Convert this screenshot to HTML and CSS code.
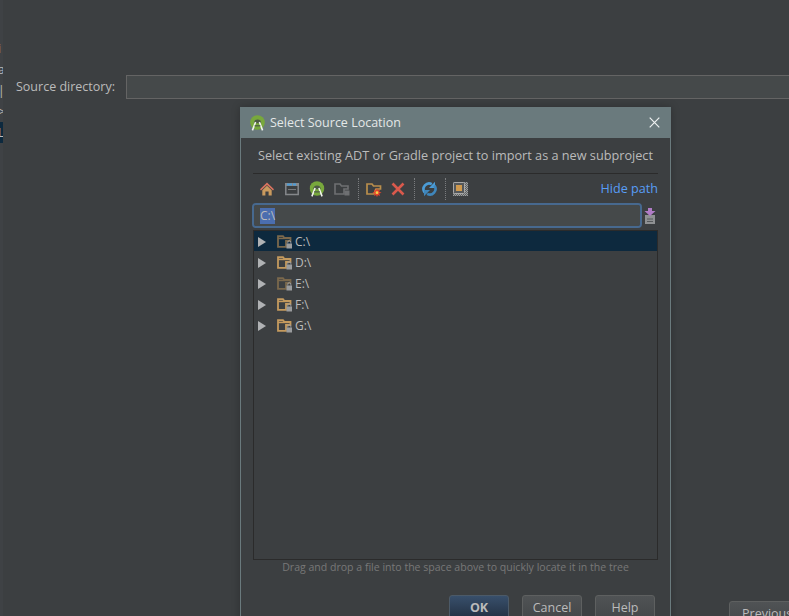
FILE: index.html
```html
<!DOCTYPE html>
<html lang="en">
<head>
<meta charset="utf-8">
<title>Select Source Location</title>
<link rel="stylesheet" href="styles.css">
</head>
<body>
<div class="page">
  <aside class="rail">
    <span class="rail-item">i</span>
    <span class="rail-item">a</span>
    <span class="rail-item">|</span>
    <span class="rail-item">&gt;</span>
    <span class="rail-item selected">L</span>
  </aside>
  <main class="wizard">
    <div class="source-row">
      <label class="source-label">Source directory:</label>
      <div class="source-input"></div>
    </div>
    <div class="wizard-footer"><button class="btn previous">Previous</button></div>
  </main>
</div>

<section class="dialog">
  <header class="titlebar">
    <svg class="title-logo" width="15" height="16" viewBox="0 0 15 16"><use href="#android"/></svg>
    <span class="title-text">Select Source Location</span>
    <svg class="close" width="11" height="11" viewBox="0 0 11 11"><path d="M.7.7L10.3 10.3M10.3.7L.7 10.3" stroke="#eef1f1" stroke-width="1.2"/></svg>
  </header>
  <div class="dialog-body">
    <p class="description">Select existing ADT or Gradle project to import as a new subproject</p>
    <div class="toolbar">
      <div class="tool-group">
        <svg class="tool" width="16" height="16" viewBox="0 0 16 16"><path d="M8 1.5L1 8.2 2 9.4 8 3.9 14 9.4 15 8.2Z" fill="#d9735f"/><path d="M3.3 9.2L8 4.8 12.7 9.2V14.5H9.6V10.5H6.4V14.5H3.3Z" fill="#c99a5e"/></svg>
        <svg class="tool" width="16" height="16" viewBox="0 0 16 16"><rect x="1.8" y="3.5" width="12.4" height="10" fill="none" stroke="#85888b" stroke-width="1.5"/><rect x="1" y="2" width="14" height="3" fill="#85888b"/><rect x="3" y="2.5" width="5" height="2" fill="#4a9bd8"/><rect x="9" y="2.5" width="3" height="2" fill="#4a9bd8"/><path d="M4 8.5H12" stroke="#77797c"/></svg>
        <svg class="tool" width="16" height="16" viewBox="0 0 15 16"><use href="#android"/></svg>
        <svg class="tool" width="16" height="16" viewBox="0 0 16 16"><path d="M1 3H6L7.5 5H14V8H10V13H1Z" fill="none" stroke="#6e7072" stroke-width="1.6"/><rect x="10.5" y="9.5" width="5" height="5" fill="#6e7072"/></svg>
      </div>
      <i class="sep"></i>
      <div class="tool-group tight">
        <svg class="tool" width="16" height="16" viewBox="0 0 16 16"><path d="M1 3H6L7.5 5H14.5V8H10L8 13H1Z" fill="none" stroke="#b98f4c" stroke-width="1.7"/><path d="M11 7L11.9 9.4 14 8.4 13.2 10.7 15.6 11.7 13.2 12.6 14 14.9 11.9 13.9 11 16.2 10.1 13.9 8 14.9 8.8 12.6 6.4 11.7 8.8 10.7 8 8.4 10.1 9.4Z" fill="#e8432a"/><circle cx="11" cy="11.7" r="1.4" fill="#f4d24a"/></svg>
        <svg class="tool" width="16" height="16" viewBox="0 0 16 16"><path d="M2.5 2.5L13.5 13.5M13.5 2.5L2.5 13.5" stroke="#d9594c" stroke-width="2.6"/></svg>
      </div>
      <i class="sep"></i>
      <div class="tool-group">
        <svg class="tool" width="15" height="16" viewBox="0 0 15 16">
          <path d="M2.6 11.4A5.6 5.6 0 0 1 9.8 3.2" fill="none" stroke="#4b9cd6" stroke-width="2.6"/>
          <path d="M13 .8V7H7Z" fill="#4b9cd6"/>
          <path d="M12.4 4.6A5.6 5.6 0 0 1 5.2 12.8" fill="none" stroke="#3f86bb" stroke-width="2.6"/>
          <path d="M2 15.2V9H8Z" fill="#3f86bb"/>
        </svg>
      </div>
      <i class="sep"></i>
      <div class="tool-group">
        <svg class="tool" width="16" height="16" viewBox="0 0 16 16"><defs><pattern id="checks" width="2" height="2" patternUnits="userSpaceOnUse"><rect width="2" height="2" fill="#5c5f61"/><rect width="1" height="1" fill="#9d9f9f"/><rect x="1" y="1" width="1" height="1" fill="#9d9f9f"/></pattern></defs><rect y="1" width="15" height="14" fill="url(#checks)"/><rect x=".5" y="1.5" width="11" height="11" rx="1" fill="#55585a" stroke="#a8a8a8"/><rect x="3" y="4" width="6" height="6" fill="#d09a4e"/></svg>
      </div>
      <a class="hide-path">Hide path</a>
    </div>
    <div class="path-row">
      <div class="path-input"><span class="path-selected">C:\</span></div>
      <svg class="path-action" width="12" height="16" viewBox="0 0 12 16"><rect x="1" y="7" width="10" height="9" fill="#8f9193"/><path d="M3 11H9M3 13.5H9" stroke="#55585a"/><path d="M4 0H8V3H11.5L6 8 .5 3H4Z" fill="#b07cc6"/></svg>
    </div>
    <ul class="tree">
      <li class="tree-row active"><i class="arrow"></i><svg class="folder dim" width="16" height="16" viewBox="0 0 16 16"><use href="#folder"/></svg><span>C:\</span></li>
      <li class="tree-row"><i class="arrow"></i><svg class="folder" width="16" height="16" viewBox="0 0 16 16"><use href="#folder"/></svg><span>D:\</span></li>
      <li class="tree-row"><i class="arrow"></i><svg class="folder dim" width="16" height="16" viewBox="0 0 16 16"><use href="#folder"/></svg><span>E:\</span></li>
      <li class="tree-row"><i class="arrow"></i><svg class="folder" width="16" height="16" viewBox="0 0 16 16"><use href="#folder"/></svg><span>F:\</span></li>
      <li class="tree-row"><i class="arrow"></i><svg class="folder" width="16" height="16" viewBox="0 0 16 16"><use href="#folder"/></svg><span>G:\</span></li>
    </ul>
    <p class="hint">Drag and drop a file into the space above to quickly locate it in the tree</p>
    <div class="actions">
      <button class="btn primary">OK</button>
      <button class="btn">Cancel</button>
      <button class="btn">Help</button>
    </div>
  </div>
</section>

<svg class="defs" width="0" height="0">
  <symbol id="folder" viewBox="0 0 16 16">
    <path d="M1 2.2H6L7.5 4H13.5V7H9V12.8H1Z" fill="none" stroke="currentColor" stroke-width="1.8"/>
    <rect x="1" y="3.6" width="12" height="1.6" fill="currentColor"/>
    <rect x="9.5" y="9.5" width="5.5" height="5" fill="#9a9c9e"/>
    <path d="M10.8 9.5V8.2A1.5 1.5 0 0 1 13.8 8.2V9.5" fill="none" stroke="#9a9c9e"/>
  </symbol>
  <symbol id="android" viewBox="0 0 15 16">
    <circle cx="7.5" cy="7.5" r="7.3" fill="#78a83c"/>
    <path d="M3.8 8.2A3.7 3.7 0 0 1 11.2 8.2Z" fill="#4d5a45"/>
    <path d="M5.6 7L2.4 15.4M9.4 7L12.6 15.4" stroke="#f0f3ec" stroke-width="1.6" fill="none"/>
    <path d="M4.6 10.8H10.4" stroke="#4d5a45" stroke-width="1.2"/>
  </symbol>
</svg>
</body>
</html>
```
FILE: styles.css
```css
* { box-sizing: border-box; }
html, body { margin: 0; height: 616px; overflow: hidden; }
body {
  background: #3c3f41;
  color: #bbbbbb;
  font-family: "Open Sans", "Noto Sans", sans-serif;
  font-size: 12px;
}
.page { display: flex; height: 616px; }
.rail {
  width: 3px;
  flex: none;
  overflow: hidden;
  padding-top: 38px;
  display: flex;
  flex-direction: column;
  background: #3f4245;
}
.rail-item { height: 21px; line-height: 21px; font-size: 12px; color: #bbbbbb; text-indent: -2px; white-space: nowrap; }
.rail-item.selected { background: #0d293e; }
.wizard { flex: 1; display: flex; flex-direction: column; min-width: 0; }
.source-row { display: flex; align-items: center; gap: 10px; padding: 75px 0 0 13px; }
.source-label { font-size: 12.5px; width: 100px; padding-bottom: 2px; color: #bbbbbb; white-space: nowrap; }
.source-input { flex: 1; height: 24px; background: #45494a; border: 1px solid #646464; margin-right: -1px; }
.wizard-footer { margin-top: auto; display: flex; justify-content: flex-end; margin-bottom: -9px; }
.dialog {
  position: absolute;
  left: 240px;
  top: 107px;
  width: 431px;
  height: 530px;
  background: #3c3f41;
  border: 1px solid #6a7a7d;
  box-shadow: 0 0 8px rgba(0, 0, 0, .25);
}
.titlebar {
  height: 30px;
  background: #6a7a7d;
  display: flex;
  align-items: center;
  padding: 0 10px 1px 9px;
  gap: 5px;
  color: #e4e8e8;
  font-size: 12.5px;
}
.title-logo { flex: none; }
.title-text { flex: 1; }
.dialog-body { padding: 0 12px; }
.description { margin: 0; padding: 8px 0 0 5px; height: 35px; line-height: 18px; font-size: 12.7px; white-space: nowrap; color: #bbbbbb; }
.toolbar {
  display: flex;
  align-items: center;
  height: 30px;
  border-top: 1px solid #2b2b2b;
  padding-left: 6px;
}
.tool-group { display: flex; gap: 9px; }
.tool-group.tight { gap: 8px; }
.tool { display: block; flex: none; }
.sep { width: 1px; height: 22px; border-left: 1px dotted #7a7c7e; margin: 0 7px 0 8px; flex: none; }
.hide-path { margin-left: auto; color: #589df6; font-size: 12.6px; }
.path-row { display: flex; align-items: center; gap: 3px; margin-top: 1px; }
.path-input {
  flex: 1;
  height: 23px;
  background: #45494a;
  border: 1px solid #2f2f2f;
  outline: 2px solid #47698f;
  outline-offset: -1px;
  border-radius: 3px;
  padding: 2px 6px;
  line-height: 17px;
  font-size: 12px;
}
.path-selected { background: #4b6eaf; color: #bbbbbb; display: inline-block; height: 16px; line-height: 15px; }
.path-action { flex: none; margin-right: 2px; }
.tree {
  list-style: none;
  margin: 3px 0 0;
  padding: 0;
  height: 330px;
  border: 1px solid #2b2b2b;
}
.tree-row { display: flex; align-items: center; height: 21px; padding-left: 4px; font-size: 12px; }
.tree-row.active { background: linear-gradient(#0d293e 20px, transparent 20px); }
.arrow { width: 0; height: 0; border-left: 8px solid #b0b2b4; border-top: 5px solid transparent; border-bottom: 5px solid transparent; margin-right: 11px; }
.folder { color: #c49a5e; margin-right: 2px; flex: none; }
.folder.dim { color: #7a684c; }
.hint { margin: 0; text-align: center; font-size: 10.55px; line-height: 15px; color: #787878; white-space: nowrap; }
.actions { display: flex; justify-content: flex-end; gap: 13px; margin-top: 20px; padding-right: 3px; }
.btn {
  width: 60px;
  height: 24px;
  padding: 0;
  border: 1px solid #5e6060;
  border-radius: 3px;
  background: linear-gradient(#505355, #45484a);
  color: #bbbbbb;
  font: 12.5px "Open Sans", "Noto Sans", sans-serif;
}
.primary { background: linear-gradient(#384f6b, #233143); border-color: #4c5a68; font-weight: 700; }
.previous { width: 70px; margin-right: -10px; text-align: left; padding-left: 12px; }
.defs { position: absolute; }
```
